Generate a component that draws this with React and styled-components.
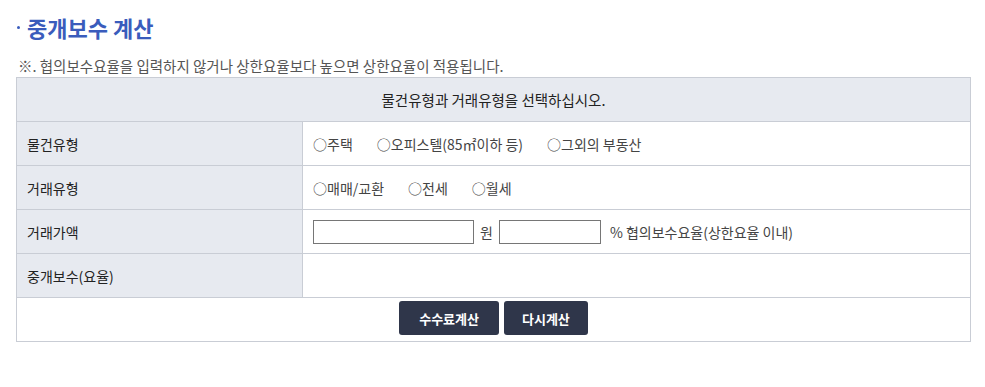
import React from "react";
import styled, { createGlobalStyle } from "styled-components";

const Global = createGlobalStyle`
  html, body { margin: 0; padding: 0; background: #fff; }
  body { font-family: "Noto Sans CJK KR", "Noto Sans", sans-serif; color: #222; }
`;

const Page = styled.div`
  padding: 8px 14px 0 16px;
`;

const Title = styled.h2`
  margin: 0;
  font-size: 22px;
  font-weight: 700;
  color: #3a5cbc;
  line-height: 38px;
  display: flex;
  align-items: center;
  gap: 7px;
  &::before {
    content: "";
    width: 3px;
    height: 3px;
    border-radius: 50%;
    background: #3a5cbc;
    margin-left: 1px;
  }
`;

const Note = styled.p`
  margin: 8px 0 0 2px;
  font-size: 14.5px;
  color: #555;
  line-height: 23px;
`;

const Table = styled.table`
  width: 955px;
  border-collapse: collapse;
  font-size: 14px;
  color: #222;
`;

const Th = styled.th`
  height: 43px;
  padding: 0 10px;
  border: 1px solid #c9cdd5;
  background: #e7eaf0;
  font-weight: 400;
  font-size: ${(p) => (p.$center ? "14.5px" : "14px")};
  text-align: ${(p) => (p.$center ? "center" : "left")};
  width: ${(p) => (p.$w ? p.$w : "auto")};
`;

const Td = styled.td`
  height: 43px;
  padding: 0 10px;
  border: 1px solid #c9cdd5;
  background: #fff;
  text-align: ${(p) => (p.$center ? "center" : "left")};
`;

const Options = styled.div`
  display: flex;
  align-items: center;
  gap: 24px;
  color: #444;
`;

const Option = styled.span`
  white-space: nowrap;
`;

const Inputs = styled.div`
  display: flex;
  align-items: center;
  color: #444;
`;

const Field = styled.input`
  box-sizing: border-box;
  width: ${(p) => p.$w}px;
  height: 24px;
  border: 1px solid #767676;
  border-radius: 0;
  padding: 0 4px;
  font: inherit;
`;

const Unit = styled.span`
  margin: 0 ${(p) => p.$r}px 0 ${(p) => p.$l}px;
`;

const Buttons = styled.div`
  display: flex;
  justify-content: center;
  gap: 5px;
  padding-bottom: 3px;
`;

const Button = styled.button`
  height: 34px;
  padding: 0 ${(p) => p.$px}px;
  border: none;
  border-radius: 3px;
  background: #2f364a;
  color: #fff;
  font-family: inherit;
  font-size: 13px;
  font-weight: 700;
  cursor: pointer;
`;

export default function App() {
  return (
    <Page>
      <Global />
      <Title>중개보수 계산</Title>
      <Note>※. 협의보수요율을 입력하지 않거나 상한요율보다 높으면 상한요율이 적용됩니다.</Note>
      <Table>
        <tbody>
          <tr>
            <Th colSpan={2} $center>물건유형과 거래유형을 선택하십시오.</Th>
          </tr>
          <tr>
            <Th $w="265px">물건유형</Th>
            <Td>
              <Options>
                <Option>○주택</Option>
                <Option>○오피스텔(85㎡이하 등)</Option>
                <Option>○그외의 부동산</Option>
              </Options>
            </Td>
          </tr>
          <tr>
            <Th>거래유형</Th>
            <Td>
              <Options>
                <Option>○매매/교환</Option>
                <Option>○전세</Option>
                <Option>○월세</Option>
              </Options>
            </Td>
          </tr>
          <tr>
            <Th>거래가액</Th>
            <Td>
              <Inputs>
                <Field $w={161} />
                <Unit $l={6} $r={6}>원</Unit>
                <Field $w={102} />
                <Unit $l={9} $r={0}>% 협의보수요율(상한요율 이내)</Unit>
              </Inputs>
            </Td>
          </tr>
          <tr>
            <Th>중개보수(요율)</Th>
            <Td />
          </tr>
          <tr>
            <Td colSpan={2} $center>
              <Buttons>
                <Button $px={20}>수수료계산</Button>
                <Button $px={18}>다시계산</Button>
              </Buttons>
            </Td>
          </tr>
        </tbody>
      </Table>
    </Page>
  );
}
